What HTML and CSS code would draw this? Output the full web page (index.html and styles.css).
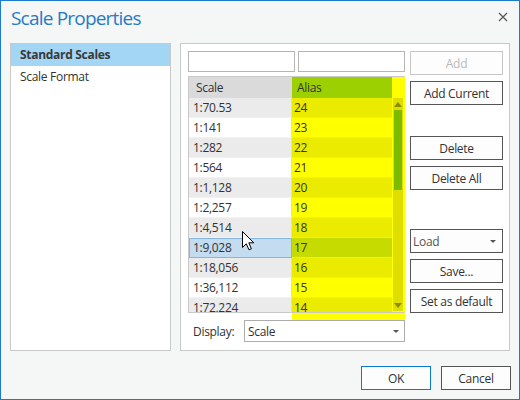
FILE: index.html
```html
<!DOCTYPE html>
<html lang="en">
<head>
    <meta charset="UTF-8">
    <title>Scale Properties</title>
    <link rel="stylesheet" href="styles.css">
</head>
<body>
    <div class="dialog">
        <header class="titlebar">
            <h1 class="title">Scale Properties</h1>
            <span class="close">
                <svg width="10" height="10" viewBox="0 0 10 10">
                    <path d="M1 1 L9 9 M9 1 L1 9" stroke="#5a5a5a" stroke-width="1.3" fill="none"/>
                </svg>
            </span>
        </header>

        <div class="content">
            <ul class="nav">
                <li class="nav-item active">Standard Scales</li>
                <li class="nav-item">Scale Format</li>
            </ul>

            <section class="panel">
                <div class="main">
                    <div class="inputs">
                        <input class="text-input" type="text">
                        <input class="text-input" type="text">
                    </div>

                    <div class="grid-wrap">
                        <div class="grid">
                            <div class="grid-cols">
                                <div class="grid-head">
                                    <div class="c-scale">Scale</div>
                                    <div class="c-alias">Alias</div>
                                </div>
                                <div class="grid-row odd"><div class="c-scale">1:70.53</div><div class="c-alias">24</div></div>
                                <div class="grid-row"><div class="c-scale">1:141</div><div class="c-alias">23</div></div>
                                <div class="grid-row odd"><div class="c-scale">1:282</div><div class="c-alias">22</div></div>
                                <div class="grid-row"><div class="c-scale">1:564</div><div class="c-alias">21</div></div>
                                <div class="grid-row odd"><div class="c-scale">1:1,128</div><div class="c-alias">20</div></div>
                                <div class="grid-row"><div class="c-scale">1:2,257</div><div class="c-alias">19</div></div>
                                <div class="grid-row odd"><div class="c-scale">1:4,514</div><div class="c-alias">18</div></div>
                                <div class="grid-row selected"><div class="c-scale">1:9,028</div><div class="c-alias">17</div></div>
                                <div class="grid-row odd"><div class="c-scale">1:18,056</div><div class="c-alias">16</div></div>
                                <div class="grid-row"><div class="c-scale">1:36,112</div><div class="c-alias">15</div></div>
                                <div class="grid-row odd"><div class="c-scale">1:72,224</div><div class="c-alias">14</div></div>
                            </div>
                            <div class="grid-scroll">
                                <div class="track">
                                    <span class="arrow up"></span>
                                    <span class="thumb"></span>
                                    <span class="arrow down"></span>
                                </div>
                            </div>
                        </div>
                        <!-- mouse pointer -->
                        <svg class="pointer" width="13" height="20" viewBox="0 0 13 20">
                            <path d="M0.5 0.5 L0.5 16.5 L4.3 12.8 L7 18.8 L9.4 17.8 L6.8 11.8 L11.8 11.8 Z"
                                fill="#fff" stroke="#000" stroke-width="1" stroke-linejoin="round"/>
                        </svg>
                    </div>

                    <div class="display">
                        <span class="display-label">Display:</span>
                        <div class="select">
                            <span>Scale</span>
                            <span class="caret"></span>
                        </div>
                    </div>
                </div>

                <div class="actions">
                    <button class="btn disabled">Add</button>
                    <button class="btn">Add Current</button>
                    <button class="btn gap-big">Delete</button>
                    <button class="btn">Delete All</button>
                    <div class="btn combo gap-huge">
                        <span>Load</span>
                        <span class="caret"></span>
                    </div>
                    <button class="btn">Save...</button>
                    <button class="btn">Set as default</button>
                </div>
            </section>
        </div>

        <footer class="footer">
            <button class="btn primary">OK</button>
            <button class="btn">Cancel</button>
        </footer>
    </div>
</body>
</html>
```

FILE: styles.css
```css
html, body {
    margin: 0;
    padding: 0;
}
body {
    font-family: "Open Sans", "Noto Sans", sans-serif;
    font-size: 12px;
    letter-spacing: -0.3px;
    color: #323232;
}

.dialog {
    width: 520px;
    height: 400px;
    box-sizing: border-box;
    border: 1px solid #1c7ad0;
    background: #f5f6f6;
    display: flex;
    flex-direction: column;
}

/* title bar */
.titlebar {
    height: 42px;
    display: flex;
    justify-content: space-between;
    align-items: flex-start;
    padding: 0 11px 0 10px;
    box-sizing: border-box;
}
.title {
    margin: 4px 0 0;
    font-size: 19px;
    font-weight: normal;
    letter-spacing: -0.8px;
    line-height: 26px;
    color: #1f7bc6;
}
.close {
    margin-top: 11px;
    display: flex;
}

/* body */
.content {
    height: 308px;
    display: flex;
    gap: 9px;
    padding: 0 9px;
}

.nav {
    list-style: none;
    margin: 0;
    padding: 0;
    width: 161px;
    box-sizing: border-box;
    border: 1px solid #c9c9c9;
    background: #fff;
}
.nav-item {
    height: 22px;
    line-height: 22px;
    padding-left: 9px;
}
.nav-item.active {
    background: #a3d5f4;
    font-weight: bold;
    color: #3a3a3a;
}

.panel {
    width: 330px;
    box-sizing: border-box;
    border: 1px solid #c9c9c9;
    background: #fff;
    display: flex;
    gap: 5px;
    padding: 7px 6px 0 7px;
}

.main {
    width: 217px;
    display: flex;
    flex-direction: column;
}

.inputs {
    display: flex;
    gap: 3px;
}
.text-input {
    flex: 1;
    min-width: 0;
    height: 21px;
    box-sizing: border-box;
    border: 1px solid #b5b5b5;
    margin: 0;
    padding: 0;
    background: #fff;
}

/* scales grid */
.grid-wrap {
    position: relative;
    margin-top: 4px;
}
.grid-wrap::after {
    /* highlight runs a little below the grid */
    content: "";
    position: absolute;
    left: 104px;
    right: 0;
    top: 100%;
    height: 7px;
    background: #ffff00;
}
.grid {
    height: 237px;
    box-sizing: border-box;
    border: 1px solid #c9c9c9;
    border-right-color: #ffff00;
    display: flex;
    overflow: hidden;
}
.grid-cols {
    width: 203px;
}
.grid-head,
.grid-row {
    display: flex;
}
.grid-head {
    height: 21px;
    line-height: 21px;
}
.grid-head .c-scale {
    background: #dadada;
    padding-left: 7px;
}
.grid-head .c-alias {
    background: #9dd000;
    padding-left: 5px;
}
.c-scale {
    width: 103px;
    box-sizing: border-box;
    border-right: 1px solid #d8dde2;
    padding-left: 4px;
}
.c-alias {
    width: 100px;
    box-sizing: border-box;
    padding-left: 2px;
}
.grid-row {
    height: 20px;
    line-height: 20px;
}
.grid-row .c-scale {
    background: #fff;
    border-bottom: 1px solid #f2f2f2;
}
.grid-row .c-alias {
    background: #ffff00;
    border-bottom: 1px solid #f4f400;
}
.grid-row.odd .c-scale {
    background: #ebebeb;
}
.grid-row.odd .c-alias {
    background: #ebeb00;
}
.grid-row.selected .c-scale {
    background: #c4dcf0;
    border: 1px solid #84b6df;
    padding-left: 3px;
    line-height: 18px;
}
.grid-row.selected .c-alias {
    background: #c6db00;
}

.grid-scroll {
    width: 12px;
    background: #ffff00;
    padding: 21px 0 1px 1px;
    box-sizing: border-box;
}
.track {
    width: 10px;
    height: 100%;
    background: #dede00;
    display: flex;
    flex-direction: column;
    align-items: center;
    position: relative;
}
.arrow {
    width: 0;
    height: 0;
    border-left: 4px solid transparent;
    border-right: 4px solid transparent;
}
.arrow.up {
    margin-top: 4px;
    border-bottom: 5px solid #8c8c00;
}
.arrow.down {
    position: absolute;
    bottom: 3px;
    border-top: 5px solid #8c8c00;
}
.thumb {
    margin-top: 3px;
    width: 8px;
    height: 80px;
    background: #7cbc00;
}

.pointer {
    position: absolute;
    left: 54px;
    top: 155px;
}

/* display combo */
.display {
    margin-top: 7px;
    display: flex;
    align-items: center;
}
.display-label {
    width: 56px;
    padding-left: 5px;
    box-sizing: border-box;
}
.select {
    flex: 1;
    height: 22px;
    box-sizing: border-box;
    border: 1px solid #adadad;
    display: flex;
    justify-content: space-between;
    align-items: center;
    padding: 0 5px 0 3px;
}
.caret {
    width: 0;
    height: 0;
    border-left: 3px solid transparent;
    border-right: 3px solid transparent;
    border-top: 3px solid #555;
}

/* buttons */
.actions {
    width: 93px;
    display: flex;
    flex-direction: column;
    gap: 6px;
}
.btn {
    height: 24px;
    box-sizing: border-box;
    border: 1px solid #555;
    background: #fdfdfd;
    font: inherit;
    letter-spacing: inherit;
    color: #323232;
    padding: 0;
    margin: 0;
}
.btn.disabled {
    border-color: #c6c6c6;
    color: #b9b9b9;
}
.btn.gap-big {
    margin-top: 25px;
}
.btn.gap-huge {
    margin-top: 33px;
}
.combo {
    display: flex;
    justify-content: space-between;
    align-items: center;
    padding: 0 6px 0 2px;
    color: #555;
}

.footer {
    display: flex;
    justify-content: flex-end;
    gap: 10px;
    padding: 15px 8px 9px;
}
.footer .btn {
    width: 70px;
    border-color: #555;
}
.footer .btn.primary {
    border-color: #0a78d4;
}
```
